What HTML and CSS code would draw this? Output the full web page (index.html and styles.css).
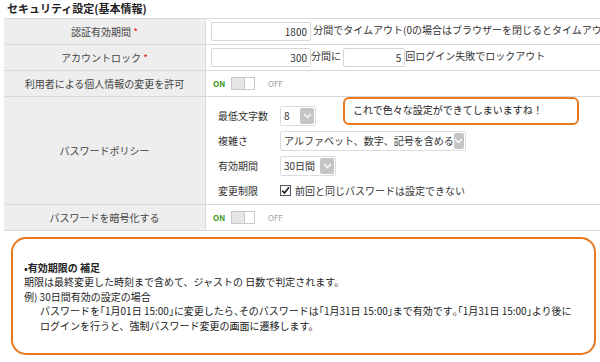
FILE: index.html
```html
<!DOCTYPE html>
<html lang="ja">
<head>
    <meta charset="UTF-8">
    <meta name="viewport" content="width=device-width, initial-scale=1.0">
    <title>セキュリティ設定</title>
    <link rel="stylesheet" href="styles.css">
</head>
<body>
    <h2 class="title">セキュリティ設定(基本情報)</h2>
    <table class="settings">
        <tr class="row-1">
            <th>認証有効期間 <span class="req">*</span></th>
            <td><span class="field w100">1800</span> 分間でタイムアウト(0の場合はブラウザーを閉じるとタイムアウト)</td>
        </tr>
        <tr class="row-2">
            <th>アカウントロック <span class="req">*</span></th>
            <td><span class="field w100">300</span>分間に <span class="field w62">5</span>回ログイン失敗でロックアウト</td>
        </tr>
        <tr class="row-3">
            <th>利用者による個人情報の変更を許可</th>
            <td>
                <div class="toggle"><span class="on">ON</span><span class="switch"><i></i></span><span class="off">OFF</span></div>
            </td>
        </tr>
        <tr class="row-4">
            <th>パスワードポリシー</th>
            <td>
                <div class="policy">
                    <div class="policy-row">
                        <span class="sub-label">最低文字数</span>
                        <span class="select w36"><span class="val">8</span><span class="arrow"><svg width="9" height="6" viewBox="0 0 9 6"><path d="M1 1l3.5 3.5L8 1" fill="none" stroke="#fff" stroke-width="1.4"/></svg></span></span>
                    </div>
                    <div class="policy-row">
                        <span class="sub-label">複雑さ</span>
                        <span class="select w186"><span class="val">アルファベット、数字、記号を含める</span><span class="arrow"><svg width="9" height="6" viewBox="0 0 9 6"><path d="M1 1l3.5 3.5L8 1" fill="none" stroke="#fff" stroke-width="1.4"/></svg></span></span>
                    </div>
                    <div class="policy-row">
                        <span class="sub-label">有効期間</span>
                        <span class="select w56"><span class="val">30日間</span><span class="arrow"><svg width="9" height="6" viewBox="0 0 9 6"><path d="M1 1l3.5 3.5L8 1" fill="none" stroke="#fff" stroke-width="1.4"/></svg></span></span>
                    </div>
                    <div class="policy-row">
                        <span class="sub-label">変更制限</span>
                        <span class="check"><svg width="11" height="11" viewBox="0 0 11 11"><rect x="0.5" y="0.5" width="10" height="10" fill="#fff" stroke="#555"/><path d="M2.2 5.6l2.3 2.4L9 2.2" fill="none" stroke="#222" stroke-width="1.6"/></svg></span>
                        <span>前回と同じパスワードは設定できない</span>
                    </div>
                </div>
            </td>
        </tr>
        <tr class="row-5">
            <th>パスワードを暗号化する</th>
            <td>
                <div class="toggle"><span class="on">ON</span><span class="switch"><i></i></span><span class="off">OFF</span></div>
            </td>
        </tr>
    </table>

    <div class="callout">これで色々な設定ができてしまいますね！</div>

    <div class="note">
        <p class="note-head">•有効期限の 補足</p>
        <p>期限は最終変更した時刻まで含めて、ジャストの 日数で判定されます。</p>
        <p>例) 30日間有効の設定の場合</p>
        <p class="indent">パスワードを<span class="br">「</span>1月01日 15:00<span class="br">」</span>に変更したら<span class="br">、</span>そのパスワードは<span class="br">「</span>1月31日 15:00<span class="br">」</span>まで有効です<span class="br">。「</span>1月31日 15:00<span class="br">」</span>より後に</p>
        <p class="indent">ログインを行うと、強制パスワード変更の画面に遷移します。</p>
    </div>
</body>
</html>
```

FILE: styles.css
```css
html, body {
    overflow: hidden;
}
body {
    margin: 0;
    padding: 0 0 0 4px;
    width: 596px;
    height: 362px;
    position: relative;
    font-family: "Noto Sans CJK JP", "Noto Sans", sans-serif;
    font-size: 10px;
    color: #333;
    background: #fff;
}
.title {
    margin: 0;
    padding: 2px 0 0 3px;
    height: 16px;
    font-size: 11px;
    line-height: 13px;
    font-weight: bold;
    color: #222;
}
.settings {
    border-collapse: collapse;
    width: 700px;
    white-space: nowrap;
}
.settings th, .settings td {
    border-top: 1px solid #d9d9d9;
    border-bottom: 1px solid #d9d9d9;
    padding: 0;
    font-weight: normal;
    line-height: 14px;
}
.settings th {
    width: 201px;
    background: #eeeeee;
    border-right: 1px solid #d9d9d9;
    text-align: center;
    color: #444;
}
.settings td {
    padding-left: 5px;
}
.row-1, .row-2, .row-3, .row-5 {
    height: 26px;
}
.row-4 {
    height: 108px;
}
.req {
    color: #e02020;
}
.field {
    display: inline-block;
    box-sizing: border-box;
    height: 19px;
    border: 1px solid #d8d8d8;
    border-radius: 2px;
    padding: 0 3px;
    text-align: right;
    line-height: 17px;
    vertical-align: middle;
    background: #fff;
}
.w100 { width: 100px; }
.w62 { width: 62px; }
.toggle {
    display: flex;
    align-items: center;
    padding-left: 2px;
    font-size: 8px;
    font-weight: bold;
}
.on {
    color: #3a9a1a;
    width: 18px;
}
.off {
    color: #a0a0a0;
    font-weight: normal;
    margin-left: 13px;
}
.switch {
    display: inline-block;
    box-sizing: border-box;
    width: 24px;
    height: 13px;
    border: 1px solid #c8c8c8;
    background: #fff;
}
.switch i {
    display: block;
    width: 12px;
    height: 11px;
    background: #e6e6e6;
    border-right: 1px solid #c8c8c8;
}
.policy {
    display: flex;
    flex-direction: column;
    gap: 4px;
    padding: 5px 0 0 7px;
}
.policy-row {
    display: flex;
    align-items: center;
    height: 21px;
}
.sub-label {
    width: 62px;
}
.select {
    display: inline-flex;
    align-items: center;
    box-sizing: border-box;
    height: 20px;
    border: 1px solid #dcdcdc;
    border-radius: 2px;
    padding-left: 3px;
    background: #fff;
}
.select .val {
    flex: 1;
}
.select .arrow {
    display: flex;
    align-items: center;
    justify-content: center;
    width: 14px;
    height: 16px;
    margin-right: 1px;
    background: #c4c4c4;
    border-radius: 2px;
}
.w36 { width: 36px; }
.w186 { width: 186px; }
.w56 { width: 56px; }
.check {
    display: inline-flex;
    margin-right: 4px;
}
.callout {
    position: absolute;
    left: 343px;
    top: 97px;
    box-sizing: border-box;
    width: 236px;
    height: 28px;
    border: 2px solid #e8781e;
    border-radius: 6px;
    background: #fff;
    padding: 4px 0 0 8px;
    line-height: 14px;
    color: #222;
}
.note {
    box-sizing: border-box;
    margin: 6px 0 0 7px;
    width: 585px;
    height: 118px;
    border: 2.5px solid #e8781e;
    border-radius: 15px;
    padding: 22px 0 0 11px;
    line-height: 14.4px;
    color: #222;
}
.note p {
    margin: 0;
    white-space: nowrap;
}
.note .br {
    font-feature-settings: "halt";
}
.note-head {
    font-weight: bold;
}
.indent {
    padding-left: 16px;
}
```
